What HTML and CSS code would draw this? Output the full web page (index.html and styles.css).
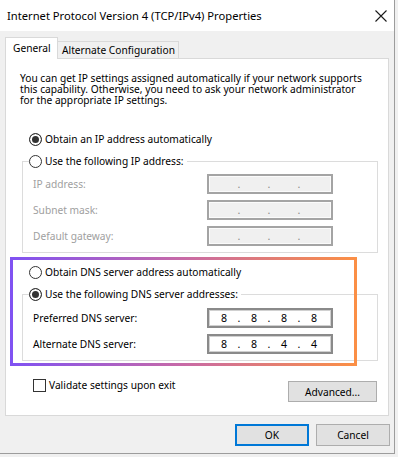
FILE: index.html
```html
<!DOCTYPE html>
<html lang="en">

<head>
    <meta charset="UTF-8">
    <title>Internet Protocol Version 4 (TCP/IPv4) Properties</title>
    <link rel="stylesheet" href="styles.css">
</head>

<body>
    <div class=window>
        <div class=titlebar>
            <span class=title>Internet Protocol Version 4 (TCP/IPv4) Properties</span>
            <svg class=close width="12" height="12" viewBox="0 0 12 12">
                <path d="M0.5 0.5L11.5 11.5M11.5 0.5L0.5 11.5" stroke="#1a1a1a" stroke-width="1.1" fill="none" />
            </svg>
        </div>
        <div class=content>
            <div class=tabs>
                <div class="tab active">General</div>
                <div class=tab>Alternate Configuration</div>
            </div>
            <div class=panel>
                <p class=desc>You can get IP settings assigned automatically if your network supports<br>this capability. Otherwise, you need to ask your network administrator<br>for the appropriate IP settings.</p>

                <label class="option first"><span class="radio checked"></span>Obtain an IP address automatically</label>
                <fieldset class=group>
                    <legend><label class=option><span class=radio></span>Use the following IP address:</label></legend>
                    <div class="rows disabled">
                        <span>IP address:</span>
                        <div class=ip><i></i><b>.</b><i></i><b>.</b><i></i><b>.</b><i></i></div>
                        <span>Subnet mask:</span>
                        <div class=ip><i></i><b>.</b><i></i><b>.</b><i></i><b>.</b><i></i></div>
                        <span>Default gateway:</span>
                        <div class=ip><i></i><b>.</b><i></i><b>.</b><i></i><b>.</b><i></i></div>
                    </div>
                </fieldset>

                <label class="option second"><span class=radio></span>Obtain DNS server address automatically</label>
                <fieldset class="group dns">
                    <legend><label class=option><span class="radio checked"></span>Use the following DNS server addresses:</label></legend>
                    <div class=rows>
                        <span>Preferred DNS server:</span>
                        <div class=ip><i>8</i><b>.</b><i>8</i><b>.</b><i>8</i><b>.</b><i>8</i></div>
                        <span>Alternate DNS server:</span>
                        <div class=ip><i>8</i><b>.</b><i>8</i><b>.</b><i>4</i><b>.</b><i>4</i></div>
                    </div>
                </fieldset>

                <div class=panel-foot>
                    <label class="option check"><span class=checkbox></span>Validate settings upon exit</label>
                    <button class="btn advanced">Advanced...</button>
                </div>

                <div class=highlight></div>
            </div>
            <div class=buttons>
                <button class="btn default">OK</button>
                <button class=btn>Cancel</button>
            </div>
        </div>
    </div>
</body>

</html>
```

FILE: styles.css
```css
* {
    margin: 0;
    padding: 0;
    box-sizing: border-box;
}

body {
    background-color: #f0f0f0;
    color: black;
    font-family: "Noto Sans", "Open Sans", sans-serif;
    font-size: 10.2px;
}

.window {
    width: 395px;
    height: 454px;
    background-color: #f0f0f0;
    border-right: 1px solid #9c9c9c;
    border-bottom: 1px solid #9c9c9c;
}

.titlebar {
    height: 31px;
    background-color: white;
    display: flex;
    align-items: center;
    padding: 0 7px 0 7px;
}

.title {
    font-size: 11.2px;
    white-space: nowrap;
}

.close {
    margin-left: auto;
}

.content {
    padding: 6px 5px 0 5px;
}

/* tabs */
.tabs {
    display: flex;
    align-items: flex-end;
    height: 21px;
}

.tab {
    height: 17px;
    display: flex;
    align-items: center;
    padding: 0 0 0 4px;
    margin-left: -1px;
    border: 1px solid #d9d9d9;
    border-bottom: 0;
    background-color: #f0f0f0;
    width: 122px;
    white-space: nowrap;
}

.tab.active {
    position: relative;
    z-index: 1;
    height: 22px;
    width: 53px;
    margin-left: 0;
    margin-bottom: -1px;
    padding: 0 0 1px 7px;
    background-color: white;
}

.panel {
    position: relative;
    width: 384px;
    background-color: white;
    border: 1px solid #d9d9d9;
    padding-bottom: 13px;
}

.desc {
    margin: 14px 0 0 14px;
    line-height: 11px;
    white-space: nowrap;
}

/* radios and checks */
.option {
    display: flex;
    align-items: center;
    height: 16px;
    white-space: nowrap;
}

.option.first {
    margin: 25px 0 0 23px;
}

.option.second {
    margin: 11px 0 0 23px;
}

.radio,
.checkbox {
    width: 13px;
    height: 13px;
    border: 1px solid #333;
    background-color: white;
    margin-right: 3px;
    flex: none;
}

.radio {
    border-radius: 50%;
}

.radio.checked {
    background-color: #333;
    box-shadow: inset 0 0 0 2px white;
}

/* group boxes */
.group {
    margin: 6px 10px 0 16px;
    border: 1px solid #dcdcdc;
    padding: 5px 6px 6px 6px;
}

.group.dns {
    padding-top: 6px;
}

.group legend {
    padding: 0 3px 0 0;
}

.rows {
    display: grid;
    grid-template-columns: 174px 126px;
    row-gap: 6px;
    align-items: center;
    padding-left: 4px;
}

.rows.disabled {
    color: #a0a0a0;
}

.ip {
    height: 20px;
    display: flex;
    align-items: center;
    padding-left: 3px;
    border: 2px solid #8a8a8a;
    box-shadow: inset 0 0 0 1px #d0d0d0;
    background-color: white;
    color: black;
    font-size: 10.6px;
}

.disabled .ip {
    background-color: #f0f0f0;
    border-color: #a4a4a4;
    box-shadow: inset 0 0 0 1px #fbfbfb;
    color: #8a8a8a;
}

.ip i {
    font-style: normal;
    width: 24px;
    text-align: center;
}

.ip b {
    font-weight: normal;
    width: 6px;
    text-align: center;
}

/* bottom of panel */
.panel-foot {
    display: flex;
    justify-content: space-between;
    align-items: flex-start;
    margin: 16px 11px 0 27px;
}

.btn {
    font: inherit;
    color: black;
    height: 22px;
    width: 74px;
    background-color: #e1e1e1;
    border: 1px solid #adadad;
}

.btn.advanced {
    margin-top: 4px;
    width: 89px;
    height: 21px;
}

.btn.default {
    border: 2px solid #0078d7;
}

.buttons {
    display: flex;
    justify-content: flex-end;
    gap: 7px;
    margin: 8px -1px 0 0;
}

/* annotation drawn over the dns part */
.highlight {
    position: absolute;
    left: 4px;
    top: 198px;
    width: 347px;
    height: 109px;
    border: 3px solid;
    border-image: linear-gradient(90deg, #8052f2, #c86aa6 50%, #fb8f45) 1;
}
```
